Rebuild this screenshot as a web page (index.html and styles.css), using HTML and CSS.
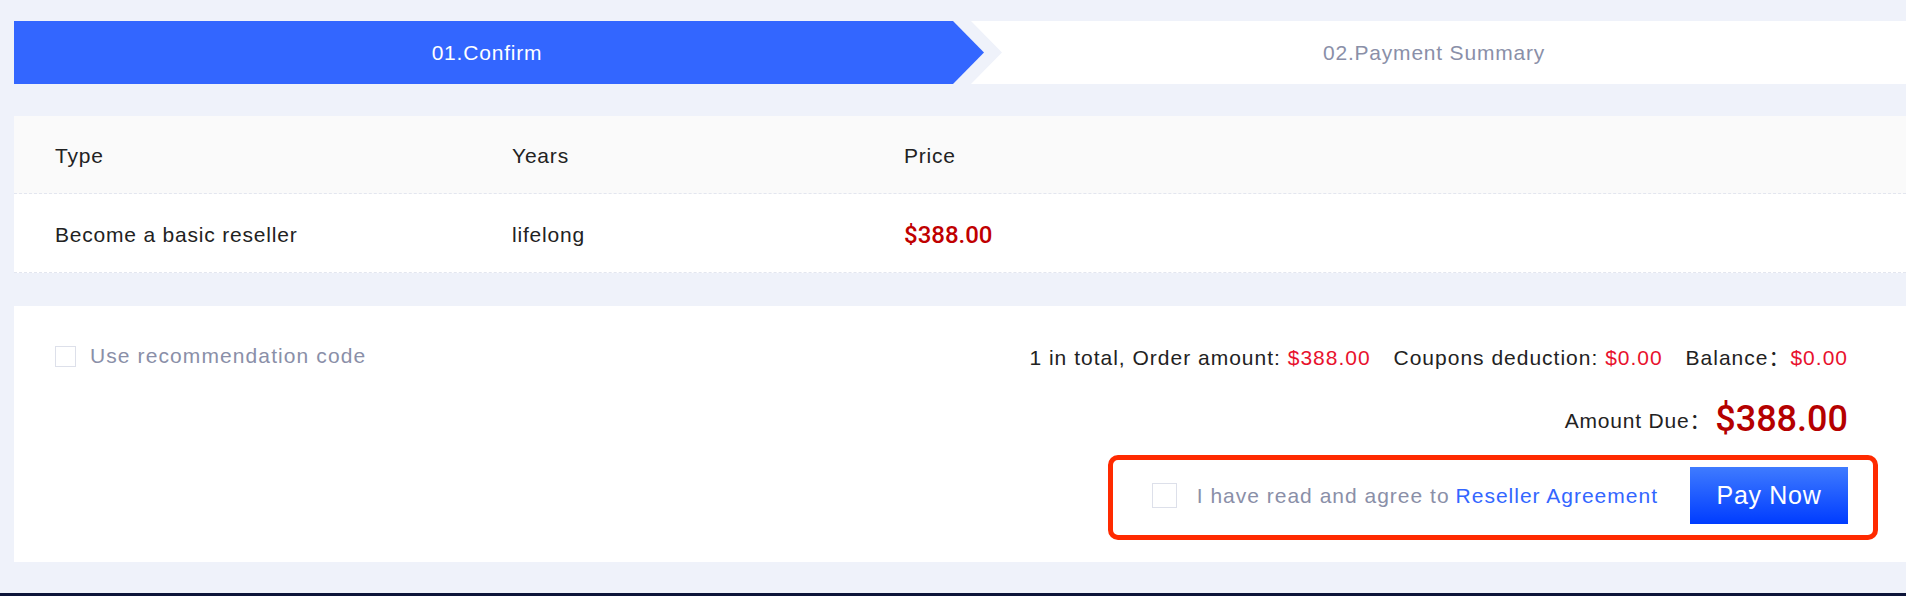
FILE: index.html
```html
<!DOCTYPE html>
<html lang="en">
  <head>
    <meta charset="UTF-8" />
    <meta name="viewport" content="width=device-width, initial-scale=1.0" />
    <title>Become a Reseller - Confirm</title>
    <link rel="stylesheet" href="styles.css">
  </head>
  <body>
    <main class="order">
      <div class="steps">
        <div class="step step-active">01.Confirm</div>
        <div class="step step-next">02.Payment Summary</div>
      </div>

      <div class="goods">
        <div class="goods-row goods-head">
          <span>Type</span>
          <span>Years</span>
          <span>Price</span>
        </div>
        <div class="goods-row">
          <span>Become a basic reseller</span>
          <span>lifelong</span>
          <span class="price">$388.00</span>
        </div>
      </div>

      <div class="checkout">
        <div class="checkout-top">
          <label class="check-label">
            <input type="checkbox" class="check" />
            Use recommendation code
          </label>
          <p class="totals">
            1 in total, Order amount: <em>$388.00</em>
            <span class="totals-item">Coupons deduction: <em>$0.00</em></span>
            <span class="totals-item">Balance：<em>$0.00</em></span>
          </p>
        </div>

        <div class="due">
          <span class="due-label">Amount Due：</span>
          <span class="due-value">$388.00</span>
        </div>

        <div class="agree">
          <label class="check-label agree-label">
            <input type="checkbox" class="check check-big" />
            I have read and agree to <a href="#" class="agree-link">Reseller Agreement</a>
          </label>
          <button class="pay-btn">Pay Now</button>
        </div>
      </div>
    </main>
    <footer class="site-footer"></footer>
  </body>
</html>
```

FILE: styles.css
```css
body {
  margin: 0;
  background-color: #eff2fa;
  font-family: "Liberation Sans", "Noto Sans CJK SC", sans-serif;
  font-size: 21px;
  letter-spacing: 0.8px;
  color: #222;
  overflow: hidden;
}

.order {
  padding: 21px 0 31px 14px;
}

/* steps */
.steps {
  display: flex;
  height: 63px;
}

.step {
  display: flex;
  align-items: center;
  justify-content: center;
  box-sizing: border-box;
}

.step-active {
  flex: none;
  width: 970px;
  padding-right: 24px;
  background-color: #3366ff;
  color: #fff;
  clip-path: polygon(0 0, calc(100% - 31px) 0, 100% 50%, calc(100% - 31px) 100%, 0 100%);
}

.step-next {
  flex: 1;
  margin-left: -13px;
  padding-right: 9px;
  background-color: #fff;
  color: #8a8fa8;
  clip-path: polygon(0 0, 100% 0, 100% 100%, 0 100%, 31px 50%);
}

/* goods table */
.goods {
  margin-top: 32px;
  background-color: #fff;
}

.goods-row {
  display: grid;
  grid-template-columns: 457px 392px 1fr;
  align-items: center;
  box-sizing: border-box;
  height: 79px;
  padding: 3px 0 0 41px;
  border-bottom: 1px dashed #e3e6ef;
}

.goods-head {
  height: 78px;
  padding-top: 2px;
  background-color: #fafafa;
}

.price {
  font-family: Roboto, sans-serif;
  font-size: 24px;
  font-weight: 500;
  letter-spacing: 0;
  color: #c00000;
}

/* checkout */
.checkout {
  margin-top: 33px;
  padding: 38px 58px 22px 41px;
  background-color: #fff;
  display: flex;
  flex-direction: column;
}

.checkout-top {
  display: flex;
  justify-content: space-between;
  align-items: center;
  height: 24px;
}

.check-label {
  display: flex;
  align-items: center;
  color: #8a8fa8;
  letter-spacing: 1.1px;
}

.check {
  appearance: none;
  width: 21px;
  height: 21px;
  margin: 0 14px 0 0;
  border: 1px solid #dde0ea;
  background: #fff;
}

.check-big {
  width: 25px;
  height: 25px;
  margin-right: 20px;
}

.totals {
  margin: 0;
  letter-spacing: 1px;
}

.totals em {
  font-style: normal;
  color: #e8112d;
}

.totals-item {
  margin-left: 16px;
}

.due {
  display: flex;
  justify-content: flex-end;
  align-items: center;
  height: 44px;
  margin-top: 29px;
}

.due-value {
  margin-left: 4px;
  font-family: Roboto, sans-serif;
  font-size: 36px;
  font-weight: 500;
  letter-spacing: 0;
  color: #b50000;
}

.agree {
  align-self: flex-end;
  display: flex;
  align-items: center;
  margin: 14px -30px 0 0;
  padding: 7px 25px 11px 39px;
  border: 5px solid #ff2a00;
  border-radius: 10px;
}

.agree-label {
  letter-spacing: 1px;
}

.agree-link {
  margin-left: 6px;
  color: #3366ff;
  text-decoration: none;
}

.pay-btn {
  width: 158px;
  height: 57px;
  margin-left: 32px;
  border: none;
  background: linear-gradient(#3f7bff, #003cff);
  color: #fff;
  font-family: inherit;
  font-size: 25px;
  letter-spacing: 0.7px;
  cursor: pointer;
}

.site-footer {
  height: 40px;
  background-color: #0c1439;
}
```
